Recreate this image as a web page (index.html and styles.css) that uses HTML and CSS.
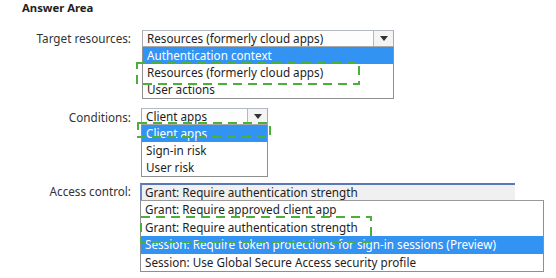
FILE: index.html
```html
<!DOCTYPE html>
<html>
<head>
<meta charset="utf-8">
<link rel="stylesheet" href="styles.css">
</head>
<body>
<div class="page">
  <div class="title">Answer Area</div>
  <div class="form">
    <div class="row row-target">
      <div class="label">Target resources:</div>
      <div class="control w-target">
        <div class="select">
          <span class="value">Resources (formerly cloud apps)</span>
          <span class="arrow"><span class="tri"></span></span>
        </div>
        <ul class="list">
          <li class="sel">Authentication context</li>
          <li>Resources (formerly cloud apps)</li>
          <li>User actions</li>
        </ul>
        <svg class="mark mark-target" width="224" height="23"><rect x="1" y="1" width="222" height="21" /></svg>
      </div>
    </div>
    <div class="row row-cond">
      <div class="label">Conditions:</div>
      <div class="control w-cond">
        <div class="select">
          <span class="value">Client apps</span>
          <span class="arrow"><span class="tri"></span></span>
        </div>
        <ul class="list">
          <li class="sel">Client apps</li>
          <li>Sign-in risk</li>
          <li>User risk</li>
        </ul>
        <svg class="mark mark-cond" width="134" height="16"><rect x="1" y="1" width="132" height="14" /></svg>
      </div>
    </div>
    <div class="row row-access">
      <div class="label">Access control:</div>
      <div class="control w-access">
        <div class="select focus">
          <span class="value">Grant: Require authentication strength</span>
        </div>
        <ul class="list list-wide">
          <li>Grant: Require approved client app</li>
          <li>Grant: Require authentication strength</li>
          <li class="sel">Session: Require token protections for sign-in sessions (Preview)</li>
          <li>Session: Use Global Secure Access security profile</li>
        </ul>
        <svg class="mark mark-access" width="232" height="27"><rect x="1" y="1" width="230" height="25" /></svg>
      </div>
    </div>
  </div>
</div>
</body>
</html>
```

FILE: styles.css
```css
* { box-sizing: border-box; }
html, body { margin: 0; padding: 0; background: #fff; }
body {
  width: 556px;
  height: 278px;
  overflow: hidden;
  font-family: "Noto Sans", "Open Sans", sans-serif;
  font-size: 11.7px;
  color: #1e1e1e;
}
.page { position: relative; width: 556px; height: 278px; }
.title {
  padding-left: 22px;
  font-weight: bold;
  font-size: 11.3px;
  line-height: 15px;
  color: #222;
}
.form { display: flex; flex-direction: column; margin-top: 15px; }
.row { display: grid; grid-template-columns: 131px auto; column-gap: 10px; align-items: start; }
.row-cond { margin-top: 9px; }
.row-access { margin-top: 6px; }
.label {
  text-align: right;
  line-height: 17px;
  color: #333;
}
.row-cond .label { padding-top: 1px; }
.control { position: relative; }
.w-target { width: 252px; margin-left: 1px; }
.w-cond { width: 127px; }
.w-access { width: 404px; margin-left: -1px; }
.select {
  height: 17px;
  border: 1px solid #a9a9a9;
  border-top-color: #b5b9c2;
  background: #fdfdfd;
  display: flex;
  align-items: center;
  line-height: 15px;
}
.select .value { flex: 1; padding-left: 4px; white-space: nowrap; overflow: hidden; }
.select .arrow {
  width: 20px;
  height: 15px;
  border-left: 1px solid #b8b8b8;
  display: flex;
  align-items: center;
  justify-content: center;
  background: #f4f4f4;
}
.tri {
  width: 0; height: 0;
  border-left: 4px solid transparent;
  border-right: 4px solid transparent;
  border-top: 5px solid #333;
}
.select.focus {
  width: 375px;
  background: #f0f0f0;
  border: none;
  border-top: 2px solid #5a78b8;
  border-left: 2px solid #6b87c4;
  height: 17px;
}
.select.focus .value { padding-left: 3px; }
.list {
  list-style: none;
  margin: 0;
  padding: 0;
  border: 1px solid #8f8f8f;
  border-top: none;
  background: #fff;
}
.list li {
  height: 17px;
  line-height: 17px;
  padding-left: 4px;
  white-space: nowrap;
}
.list-wide li { height: 17.5px; line-height: 17.5px; }
.list-wide { border-top: 1px solid #9a9a9a; }
.list li.sel { background: #3393f3; color: #fff; }
.mark { position: absolute; overflow: visible; pointer-events: none; }
.mark rect { fill: none; stroke: #4caf3c; stroke-width: 2; stroke-dasharray: 9 6; }
.mark-target { left: -6px; top: 32px; }
.mark-cond { left: -4px; top: 14px; }
.mark-access { left: 0; top: 33px; }
```
